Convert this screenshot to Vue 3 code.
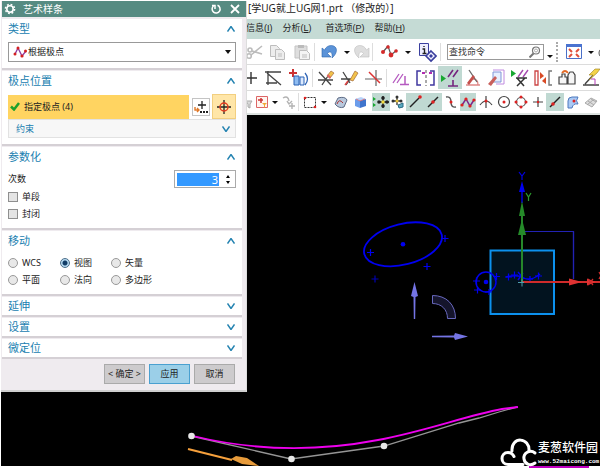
<script setup>
import { ref } from 'vue'

const method = ref('poles')
const degree = ref(3)
const single = ref(false)
const closed = ref(false)
const moveMode = ref('view')

const moveModes = [
  { id: 'wcs', label: 'WCS' },
  { id: 'view', label: '视图' },
  { id: 'vector', label: '矢量' },
  { id: 'plane', label: '平面' },
  { id: 'normal', label: '法向' },
  { id: 'polygon', label: '多边形' }
]

const collapsed = ['延伸', '设置', '微定位']

const menus = [
  { text: '信息', key: 'I' },
  { text: '分析', key: 'L' },
  { text: '首选项', key: 'P' },
  { text: '帮助', key: 'H' }
]

const CARET = '<path d="M-3-1h6L0 2z" fill="#111"/>'

// Glyphs are drawn around the origin of each button.
const fileTools = [
  { n: '剪切', w: 18, g: '<g fill="none" stroke="#bcbcbc" stroke-width="1.6"><path d="M-4 3 7-6M-3-1 7 2"/><circle cx="-6" cy="4" r="2.3"/><circle cx="-5" cy="-2" r="2"/></g>' },
  { n: '复制', w: 26, g: '<g fill="#ededed" stroke="#bdbdbd"><path d="M-6.500-6.500h6l3 3v8h-9z"/><path d="M-1.500-2.500h6l3 3v7h-9z"/><path d="M1 2h4M1 4h4"/></g>' },
  { n: '粘贴', w: 24, g: '<path d="M-7-6H5V6H-7z" fill="#dedede" stroke="#c3c3c3"/><path d="M-4-7h6v3h-6z" fill="#bbb"/><path d="M-2.500-1.500h7l3 3v6h-10z" fill="#f4f4f4" stroke="#bdbdbd"/><path d="M0 3h5M0 5h5" stroke="#bdbdbd"/>' },
  { sep: true },
  { n: '撤销', w: 26, g: '<path d="M-7-4v9h9l-3.500-3.500C0-1 4-1 3 6c6-5 6-12-.5-12.500C-1-6.500-3-5-4.500-2z" fill="#5b93d8" stroke="#2e64ad" stroke-width=".6"/>' },
  { n: '撤销列表', w: 10, g: CARET },
  { n: '重做', w: 20, g: '<path d="M7-4v9h-9l3.500-3.500C0-1-4-1-3 6c-6-5-6-12 .5-12.500C1-6.500 3-5 4.500-2z" fill="#dedede" stroke="#bdbdbd" stroke-width=".6"/>' },
  { sep: true },
  { n: '样条', w: 30, g: '<path d="M-6 0-1-6 2 3 8-2" fill="none" stroke="#555" stroke-width="1.2"/><g fill="#d52b2b"><circle cx="-6" cy="0" r="2"/><circle cx="-1" cy="-5" r="1.800"/><circle cx="2" cy="3" r="2.4"/><circle cx="7" cy="-1" r="1.800"/></g>' },
  { n: '样条列表', w: 8, g: CARET },
  { n: '对象信息', w: 28, g: '<path d="M-6.500-8.500h9v12h-9z" fill="#eef" stroke="#3a3f9e"/><path d="M-2-6v1M-3.500-3h2v4M-3.500 1.500h4" stroke="#222" fill="none" stroke-width="1.4"/><path d="m5-1 5 5-5 5-5-5z" fill="#eef" stroke="#3a3f9e" stroke-width="1.6"/><path d="m5 2 2 2-2 2-2-2z" fill="#3a3f9e"/>' },
  { sep: true }
]
const windowTools = [
  { n: '适合窗口', w: 24, g: '<path d="M-7.500-7.500h15v14h-15z" fill="#fff" stroke="#4a6fc8"/><path d="M-8-8H8v3H-8z" fill="#4a73d0"/><path d="m-5-3 3 3m7-3-3 3M-5 5l3-3M5 5 2 2" stroke="#e0503c" stroke-width="2"/>' },
  { n: '窗口列表', w: 10, g: CARET },
  { n: '更多', w: 10, g: '<circle cx="3" cy="1" r="5" fill="none" stroke="#555"/>' }
]

const sketchTools = [
  { n: '点', w: 14, g: '<path d="M-2-6V6M-8 0H4" stroke="#333" stroke-width="1.4"/>' },
  { n: '修剪', w: 26, g: '<path d="M-8-6H8M-5-7V7M-6-5 8 7M-7 5H4" stroke="#444" stroke-width="1.3" fill="none"/>' },
  { n: '拉伸', w: 26, g: '<path d="M-6-9v8M-10-5h8" stroke="#c33" stroke-width="2"/><path d="M-5-2h5V7h-5z" fill="#8fbcf0" stroke="#2b62b5"/><path d="M1-1h4v8H1z" fill="#dceaff" stroke="#2b62b5"/><path d="M6-5q5 6 0 12" fill="none" stroke="#2b62b5" stroke-width="1.2"/>' },
  { sep: true },
  { n: '快速修剪', w: 24, g: '<path d="M-7-6 5 7M-8 2H7M-4 7 2-2" stroke="#444" stroke-width="1.3"/><path d="m1-2 4-5 3 2-4 5z" fill="#f2c34b" stroke="#a56a3a" stroke-width=".7"/><path d="m1-2 1-2 3 3-1 2z" fill="#e06666"/>' },
  { n: '快速延伸', w: 24, g: '<path d="M-7-6 0 5M-9 1H0L-4 7" stroke="#444" stroke-width="1.3" fill="none"/><path d="M-2 3-5 7" stroke="#d44" stroke-width="1.600"/><path d="m0 2 5-9 3 2-5 8z" fill="#f2c34b" stroke="#a56a3a" stroke-width=".7"/>' },
  { n: '制作拐角', w: 24, g: '<path d="M-9 1H8M2-8V8" stroke="#666" stroke-width="1.200"/><path d="M-5-6 6 5" stroke="#dc3333" stroke-width="1.5"/>' },
  { sep: true },
  { n: '几何约束', w: 26, g: '<path d="m-8 5 6-9M-4 5l6-9" stroke="#b55ac0" stroke-width="1.3"/><path d="M4-2V6M-1 6.500H8" stroke="#b55ac0" stroke-width="1.5"/>' },
  { n: '对称', w: 24, g: '<path d="M-5-7h-4V7h4M4-7h4V7H4" stroke="#4038a0" stroke-width="1.5" fill="none"/><path d="M0-8V8" stroke="#555" stroke-dasharray="3 2"/><path d="m-4-5 3 0m4 0h3" stroke="#b12db1" stroke-width="2"/>' },
  { n: '显示约束', w: 24, on: true, g: '<path d="M-9-3v7l5-3.500z" fill="#19a832"/><path d="m-2-1 5-7M3-1l5-7M3 2v6M-2 8H8" stroke="#75247f" stroke-width="1.6"/>' },
  { n: '角度', w: 22, g: '<path d="M-7 7H7M0 1q5 0 5 6" stroke="#e08888" fill="none" stroke-width="1.3"/><path d="M-4-8 4 4" stroke="#666" stroke-width="1.3"/><path d="m-6 5 6-8 2 2-6 8z" fill="#c4504c"/>' },
  { n: '自动尺寸', w: 24, g: '<path d="M-3-6H5V4h-8z" fill="#e6efff" stroke="#8094d6"/><path d="M-3-8H8M8-8V6H0" fill="none" stroke="#c08ae0"/><path d="m-8 6 7-8 2 2-6 8z" fill="#c9605c"/>' },
  { n: '删除约束', w: 24, g: '<path d="M-9-8v7l5-3.500z" fill="#19a832"/><path d="m-2-1 5-7M3-1l5-7" stroke="#a64bb0" stroke-width="1.4"/><path d="m-3 0 7 8M5 0l-8 8M-4 0H7" stroke="#333" stroke-width="1.5"/>' },
  { n: '镜像', w: 22, g: '<path d="M-8-7h3V7h-3z" fill="none" stroke="#c44" stroke-width="1.3"/><path d="M9-7H6V7h3" fill="none" stroke="#777" stroke-width="1.4"/><path d="M-3-6v7l4-3zM3-1v7l-4-3z" fill="#d84b26"/>' },
  { n: '偏置', w: 26, g: '<path d="M-8 6V-1h3v-3h3v3h2v7zM1 6V-3l2-3h3l2 3v9z" fill="#f6f6f6" stroke="#444" stroke-width="1.2"/><path d="M-5-5q3-4 6 0" fill="none" stroke="#e46a26" stroke-width="1.800"/>' },
  { n: '推断约束', w: 22, g: '<path d="M-6 6 5-6M-8 7H8" fill="none" stroke="#444" stroke-width="1.4"/><path d="M4-9-2-3h4l-4 5 8-7H6l3-4z" fill="#f3d34a" stroke="#9b7d1c" stroke-width=".6"/><path d="M0 1h4v6" fill="none" stroke="#b43eb8"/>' }
]

const snapTools = [
  { n: '过滤', w: 8, g: '<path d="M-4-1h6L0 2v4l-2-1V2z" fill="#ddd" stroke="#aaa"/>' },
  { n: '选择过滤', w: 16, g: '<path d="M-5.500-5.500h11v11h-11z" fill="#fff5f0" stroke="#d66"/><path d="M-1-4v5M-4-2h5" stroke="#c33" stroke-width="1.5"/><path d="M0 1h5L3 3v3L2 5V3z" fill="#f0a733"/>' },
  { n: '过滤列表', w: 10, g: CARET },
  { n: '重置过滤', w: 18, g: '<path d="M-6-4q5-3 6 3M-2-1l2 3 3-3M0 4h6M3 1v6" fill="none" stroke="#b3b3b3" stroke-width="1.4"/>' },
  { sep: true },
  { n: '矩形选择', w: 20, g: '<path d="M-5.500-4.500h11v10h-11z" fill="none" stroke="#333" stroke-dasharray="2 1"/><circle cx="-5" cy="-4" r="1.3" fill="#d22"/><circle cx="5" cy="5" r="1.300" fill="#d22"/>' },
  { n: '选择列表', w: 8, g: CARET },
  { n: '面', w: 24, g: '<path d="M-5 2-2-4q7-2 9 2L4 5q-5 2-9-3z" fill="#b9c9dd" stroke="#5d6b85"/><path d="M-3 2q2-6 6-1" fill="none" stroke="#a33"/>' },
  { n: '实体', w: 16, g: '<path d="m-5-3 6-2 5 2-6 2z" fill="#b9d3fa"/><path d="m-5-3 5 2v7l-5-2z" fill="#6b9deb"/><path d="m0-1 6-2v7L0 6z" fill="#3f74cc"/><path d="m-4-3 4 2 5-2" stroke="#d55" fill="none" stroke-width=".7"/>' },
  { gap: true },
  { n: '启用捕捉', w: 18, on: true, g: '<path d="M-8-5v4l3-2zM-8 1v4l3-2z" fill="#19a832"/><path d="M2-6v12M-3 0H8" stroke="#222" stroke-width="1.4"/><g fill="#222"><circle cx="2" cy="-4" r="1.800"/><circle cx="2" cy="4" r="1.800"/><circle cx="-2" cy="0" r="1.800"/><circle cx="6" cy="0" r="1.800"/></g><circle cx="2" cy="0" r="1.700" fill="#f3dc41"/>' },
  { n: '捕捉设置', w: 16, g: '<path d="M-1-6v9M-5-1h8" stroke="#333" stroke-width="1.300"/><g fill="#333"><circle cx="-1" cy="-5" r="1.500"/><circle cx="-5" cy="-1" r="1.500"/><circle cx="3" cy="-1" r="1.500"/></g><circle cx="-1" cy="-1" r="1.500" fill="#e8c53a"/><path d="m0 3 5-2v4l-4 1z" fill="#5dabc3" stroke="#296c83"/>' },
  { n: '端点', w: 18, on: true, g: '<path d="m-5 5 9-9" stroke="#222" stroke-width="1.400"/><circle cx="5" cy="-5" r="1.800" fill="#d22"/>' },
  { n: '中点', w: 18, on: true, g: '<path d="m-5 5 10-10" stroke="#222" stroke-width="1.400"/><circle r="1.800" fill="#d22"/>' },
  { n: '控制点', w: 18, g: '<path d="M-5-5q5-1 5 5t5 5" fill="none" stroke="#555" stroke-width="1.400"/><circle r="1.500" fill="#d22"/>' },
  { n: '极点', w: 16, on: true, g: '<path d="m-6 3 4-6 4 7 4-6" fill="none" stroke="#7b278b" stroke-width="1.500"/><g fill="#d22"><circle cx="-6" cy="3" r="1.600"/><circle cx="-2" cy="-3" r="1.600"/><circle cx="2" cy="4" r="1.600"/><circle cx="6" cy="-2" r="1.600"/></g>' },
  { n: '交点', w: 20, g: '<path d="M-6 3q6-8 12 0M0-6V6" fill="none" stroke="#444" stroke-width="1.200"/><circle cy="-1" r="1.500" fill="#d22"/>' },
  { n: '圆心', w: 16, g: '<circle r="5.500" fill="none" stroke="#444" stroke-width="1.200"/><circle r="1.500" fill="#d22"/>' },
  { n: '象限点', w: 18, g: '<circle r="4.500" fill="none" stroke="#555" stroke-width="1.200"/><g fill="#d22"><circle cx="-5" r="1.500"/><circle cx="5" r="1.500"/><circle cy="-5" r="1.500"/><circle cy="5" r="1.500"/></g>' },
  { n: '现有点', w: 16, g: '<path d="M0-5V5M-5 0H5" stroke="#444" stroke-width="1.200"/><circle r="1.200" fill="#d22"/>' },
  { n: '曲线上点', w: 18, on: true, g: '<path d="m-5 5 10-10" stroke="#222" stroke-width="1.400"/><circle cx="-2" cy="2" r="1.800" fill="#d22"/>' },
  { n: '面上点', w: 18, g: '<path d="M-5-1q0-4 4-4h6q-3 4 0 7-5-1-6 4h-4z" fill="#a9c9f5" stroke="#4d78bd"/><circle cx="1" cy="-1" r="1.500" fill="#d22"/>' },
  { n: '网格点', w: 18, g: '<path d="m-6 1 6-5 6 3-5 6zM-3-1l6 4M0-3l5 3M-4 3l6-5" fill="#ddd" stroke="#aaa"/>' }
]
const rows = [sketchTools, snapTools]
</script>

<template>
  <div class="app">
    <header class="chrome">
      <h1 class="doc">[学UG就上UG网1.prt （修改的）]</h1>
      <nav class="menu">
        <a v-for="m in menus" :key="m.key" href="#">{{ m.text }}(<u>{{ m.key }}</u>)</a>
      </nav>
      <div class="bar bar-file">
        <template v-for="(t, i) in fileTools" :key="i">
          <span v-if="t.sep" class="sep"></span>
          <button v-else class="tool" :style="{ width: t.w + 'px' }" :aria-label="t.n">
            <svg viewBox="-11 -11 22 22" width="22" height="22" v-html="t.g" />
          </button>
        </template>
        <label class="search">
          <input type="text" placeholder="查找命令" aria-label="查找命令" />
          <svg viewBox="0 0 12 12" width="12" height="12"><circle cx="7" cy="4.500" r="3.500" fill="#fff" stroke="#777" stroke-width="1.200" /><circle cx="7" cy="4.500" r="1.500" fill="none" stroke="#aaa" /><path d="m4.500 7.500-4 4" stroke="#777" stroke-width="2" /></svg>
        </label>
        <button class="tool low" aria-label="搜索列表"><svg viewBox="-4 -4 8 8" width="8" height="8"><path d="M-3-1h6L0 2z" fill="#111" /></svg></button>
        <span class="grip"></span>
        <button v-for="t in windowTools" :key="t.n" class="tool" :style="{ width: t.w + 'px' }" :aria-label="t.n">
          <svg viewBox="-11 -11 22 22" width="22" height="22" v-html="t.g" />
        </button>
      </div>
      <div v-for="(row, r) in rows" :key="r" class="bar" :class="r ? 'bar-snap' : 'bar-sketch'">
        <template v-for="(t, i) in row" :key="i">
          <span v-if="t.sep" class="sep"></span>
          <span v-else-if="t.gap" class="gap"></span>
          <button v-else class="tool" :class="{ on: t.on }" :style="{ width: t.w + 'px' }" :aria-label="t.n">
            <svg viewBox="-11 -11 22 22" width="22" height="22" v-html="t.g" />
          </button>
        </template>
      </div>
    </header>

    <main class="canvas">
      <svg class="scene" viewBox="1 115 599 353" preserveAspectRatio="xMinYMin meet">
        <path d="M0 114H600V466H0z" fill="#000" />
        <g fill="none" stroke="#0000f0" stroke-width="1.500">
          <ellipse cx="403" cy="244.300" rx="39.900" ry="20.300" transform="rotate(-14.200 403 244.300)" stroke-width="1.800" />
          <path d="M367 252.500h7m-3.500-3.500v7M441.500 238.500h7m-3.500-3.500v7M423.500 266.500h7m-3.500-3.500v7" stroke-width="1.200" />
          <path d="M371.500 279h7m-3.500-3.500v7" stroke="#0000b0" stroke-width="1.200" />
          <path d="M525 231.500h48.500V279" stroke="#2222b4" stroke-width="1.200" />
        </g>
        <circle cx="403" cy="244.300" r="2.300" fill="#0000f0" />
        <path d="M490.500 250.500h63.500v63.500h-63.500z" fill="#02131f" stroke="#0c91ee" stroke-width="2" />
        <path d="M573.500 231.500V279" stroke="#2222b4" stroke-width="1.200" />
        <g fill="none" stroke="#0000f0" stroke-width="1.500">
          <circle cx="486" cy="282" r="10" />
          <path d="M473 281h7m-3.500-3.500v7M474 290h7m-3.500-3.500v7M493 276.500h7m-3.500-3.500v7M485 292h7m-3-3v6M505 277h7m-3.500-3.500v7M511 275h7m-3.500-3.500v7M535 276h7m-3.500-3.500v7" stroke-width="1.200" />
          <path d="M506 277q12-3 18 1t16-4M518 272l6 7m-1-6-5 7M526 279h7m-3-3v6" stroke-width="1.400" />
        </g>
        <circle cx="486" cy="282" r="2.300" fill="#0000f0" />
        <path d="M522 203v-19" stroke="#0000d8" stroke-width="1.500" />
        <path d="m522 181-3 11h6z" fill="#0000f0" />
        <path d="M519 172l3 4 3-4m-3 4v4" fill="none" stroke="#0000e0" stroke-width="1.200" />
        <path d="M522 282v-76" stroke="#26872a" stroke-width="2" />
        <path d="m522 201-3 15h6zm0 18-4 16h8z" fill="#258a29" />
        <path d="m526 193 2.500 4 2.500-4m-2.500 4v4" fill="none" stroke="#2c9a2d" stroke-width="1.200" />
        <path d="M522 282h78" stroke="#cf2b2b" stroke-width="2" />
        <path d="M569 278.500v7l13-3.500zM587 278.500v7l9-3.500z" fill="#e03232" />
        <path d="m588 279 5 6m0-6-5 6" stroke="#cf2b2b" stroke-width="1.200" />
        <path d="m599 272 4 7m0-7-4 7" stroke="#cf2b2b" stroke-width="1.200" />
        <path d="M518 282.500h6m-2-3v7" stroke="#4f9fae" stroke-width="1" />
        <g fill="#7474e4">
          <path d="m414.500 282 3.500 14-2.500 1-.3 22h-1.400l-.3-22-2.500-1z" />
          <path d="m468 336.500-13 3.500-1-2.500-22-.3v-1.400l22-.3 1-2.500z" />
        </g>
        <path d="M432.500 295.500c14 0 23 9 23 23h-8c0-9-6-15-15-15z" fill="#15152c" stroke="#6868be" />

        <path d="m191 436 100 23 93-13 75-23 20-5 20-6 18-5" fill="none" stroke="#959595" stroke-width="1.300" />
        <path d="M193 436q91 22 185 4c48-9 87-24 124-31l16-2" fill="none" stroke="#ee00ee" stroke-width="1.800" />
        <g fill="#e8e8e8"><circle cx="191.500" cy="436" r="3.300" /><circle cx="291.500" cy="459" r="3.300" /><circle cx="384" cy="446" r="3.300" /></g>
        <path d="m188 449 44 11" stroke="#f6a03c" stroke-width="2" />
        <path d="m231 459 5-3 11 2 12 8-17-2z" fill="#e79b3b" />
        <path d="M529 467h60" stroke="#c000c0" stroke-width="2" />
        <g fill="none" stroke="#fff" stroke-width="3" stroke-linecap="round">
          <path d="M523 464.500h-15c-8 0-8-12 0-12 3 0 5 2 6 4M512 451c-1-15 18-14 17 0" />
          <path d="M535 453c-5-4-12 0-11 6 1 6 7 7 11 4" />
        </g>
        <text x="538" y="452" class="mark">麦葱软件园</text>
        <text x="538" y="463" class="site">www.52maicong.com</text>
      </svg>
    </main>

    <section class="dialog" aria-label="艺术样条">
      <header class="caption">
        <svg viewBox="-6 -6 12 12" width="12" height="12"><circle r="3.200" fill="none" stroke="#fff" stroke-width="1.600" /><circle r="4.600" fill="none" stroke="#fff" stroke-width="1.500" stroke-dasharray="1.800 1.810" /></svg>
        <h2>艺术样条</h2>
        <button aria-label="重置"><svg viewBox="-6 -6 12 12" width="12" height="12"><path d="M-2.500-3a4 4 0 1 0 4-.7M-4-3.500h3V0" fill="none" stroke="#fff" stroke-width="1.500" /></svg></button>
        <button aria-label="关闭"><svg viewBox="-6 -6 12 12" width="12" height="12"><path d="m-4-4 8 8m0-8-8 8" stroke="#fff" stroke-width="1.800" /></svg></button>
      </header>

      <div class="panel">
        <button class="head">类型<svg viewBox="0 0 8 6" width="8" height="6"><path d="m.500 5.500 3.500-5 3.500 5" /></svg></button>
        <label class="pick">
          <svg viewBox="0 0 14 12" width="14" height="12"><path d="m2 8 3-6 4 8 4-5" fill="none" stroke="#9340a0" stroke-width="1.400" /><g fill="#d42020"><circle cx="2" cy="8" r="1.500" /><circle cx="5" cy="2" r="1.500" /><circle cx="9" cy="10" r="1.600" /><circle cx="12.500" cy="5" r="1.500" /></g></svg>
          <select v-model="method" aria-label="类型"><option value="poles">根据极点</option><option value="through">通过点</option></select>
          <svg viewBox="0 0 6 4" width="6" height="4"><path d="M0 0h6L3 4z" fill="#111" /></svg>
        </label>
      </div>

      <div class="panel">
        <button class="head">极点位置<svg viewBox="0 0 8 6" width="8" height="6"><path d="m.500 5.500 3.500-5 3.500 5" /></svg></button>
        <div class="specify">
          <button class="current"><svg viewBox="0 0 10 9" width="10" height="9"><path d="m1 4.500 3 3L9 1" fill="none" stroke="#1ea02c" stroke-width="2.500" /></svg>指定极点 (4)</button>
          <button class="ctor" aria-label="点构造器"><svg viewBox="0 0 16 16" width="16" height="16"><path d="M9 2v8M5 6h8" stroke="#222" stroke-width="1.300" /><path d="M2 8v3h4m-2-2 2 2-2 2" fill="none" stroke="#e07828" stroke-width="1.400" /><path d="M7 12h2v2H7zm3 0h2v2h-2zm3 0h2v2h-2z" fill="#222" /></svg></button>
          <button class="aim" aria-label="推断点"><svg viewBox="-8 -8 16 16" width="16" height="16"><path d="M0-7V7M-7 0H7" stroke="#222" stroke-width="1.300" /><circle r="4" fill="none" stroke="#e33b20" stroke-width="1.500" /></svg></button>
        </div>
        <button class="sub">约束<svg viewBox="0 0 8 6" width="8" height="6"><path d="m.500.500 3.500 5 3.500-5" /></svg></button>
      </div>

      <div class="panel">
        <button class="head">参数化<svg viewBox="0 0 8 6" width="8" height="6"><path d="m.500 5.500 3.500-5 3.500 5" /></svg></button>
        <div class="field">
          <label for="degree">次数</label>
          <div class="spin">
            <input id="degree" v-model="degree" type="text" />
            <div class="steps">
              <button aria-label="增加" @click="degree++"><svg viewBox="0 0 4 3" width="4" height="3"><path d="M0 3h4L2 0z" /></svg></button>
              <button aria-label="减少" @click="degree--"><svg viewBox="0 0 4 3" width="4" height="3"><path d="M0 0h4L2 3z" /></svg></button>
            </div>
          </div>
        </div>
        <label class="check"><input v-model="single" type="checkbox" />单段</label>
        <label class="check"><input v-model="closed" type="checkbox" />封闭</label>
      </div>

      <div class="panel">
        <button class="head">移动<svg viewBox="0 0 8 6" width="8" height="6"><path d="m.500 5.500 3.500-5 3.500 5" /></svg></button>
        <div class="modes">
          <label v-for="m in moveModes" :key="m.id"><input v-model="moveMode" type="radio" name="move" :value="m.id" />{{ m.label }}</label>
        </div>
      </div>

      <div v-for="c in collapsed" :key="c" class="panel shut">
        <button class="head">{{ c }}<svg viewBox="0 0 8 6" width="8" height="6"><path d="m.500.500 3.500 5 3.500-5" /></svg></button>
      </div>

      <footer class="actions">
        <button>&lt; 确定 &gt;</button>
        <button class="primary">应用</button>
        <button>取消</button>
      </footer>
    </section>
  </div>
</template>

<style>
body { background: #fff; }
</style>

<style scoped>
.app {
  position: relative;
  display: flex;
  flex-direction: column;
  min-height: 100vh;
  overflow: hidden;
  font: 9px/12px "Noto Sans", "Noto Sans CJK SC", sans-serif;
  color: #222;
}
.app *, .app { box-sizing: border-box; }
button, input, select { font: inherit; color: inherit; }
button { border: 0; padding: 0; margin: 0; background: none; }
h1, h2 { margin: 0; font-weight: 400; }
svg { display: block; flex: none; }

.chrome { margin-left: 246px; overflow: hidden; }
.doc { height: 19px; padding-left: 2px; font-size: 10px; line-height: 17px; white-space: nowrap; }
.menu { display: flex; gap: 10px; height: 20px; background: #c5dbd5; font-family: "Liberation Sans", "Noto Sans CJK SC", sans-serif; line-height: 18px; white-space: nowrap; }
.menu a { color: #222; text-decoration: none; }
.menu a:nth-child(3) { margin-left: 4px; }
.bar { display: flex; align-items: center; border-bottom: 1px solid #dcdcdc; background: #fff; }
.bar-file { height: 26px; }
.bar-sketch { height: 26px; }
.bar-snap { height: 24px; border-bottom: 2px solid #dce2e0; }
.tool { display: flex; flex: none; align-items: center; justify-content: center; align-self: stretch; overflow: hidden; }
.bar-snap .tool { margin: 2px 0; }
.bar-sketch .tool { margin: 1px 0; }
.on { background: #c0d9d2; }
.sep { flex: none; width: 2px; height: 18px; border-left: 1px solid #ddd; }
.gap { flex: none; width: 4px; }
.search { display: flex; align-items: center; flex: none; width: 97px; height: 16px; margin-left: 5px; padding-right: 2px; border: 1px solid #999; }
.search input { flex: 1; min-width: 0; height: 12px; padding: 0 0 0 1px; border: 0; outline: 0; background: none; }
.search input::placeholder { color: #333; opacity: 1; }
.low { align-items: flex-end; width: 12px; padding-bottom: 4px; }
.grip { flex: none; width: 3px; height: 20px; margin: 0 3px 0 0; border-left: 2px dotted #aaa; }

.canvas { flex: 1; margin-left: 1px; }
.scene { width: 100%; height: auto; }
.mark { font: 500 12px "Noto Sans CJK SC", sans-serif; fill: #fff; }
.site { font: bold 6px "Liberation Mono", monospace; fill: #fff; }

.dialog { position: absolute; top: 1px; left: 1px; width: 246px; padding: 0 4px 6px 1px; border-right: 1px solid #ddd; border-bottom: 2px solid #cfcfcf; background: #efebef; }
.caption { display: flex; align-items: center; gap: 7px; height: 16px; margin: 0 -4px 2px 0; padding: 0 5px 0 2px; background: #568b82; color: #fff; }
.caption h2 { flex: 1; font-size: 10px; line-height: 14px; }
.panel { margin-bottom: 1px; padding: 2px 6px 6px; border-bottom: 2px solid #d5d0d5; background: #fff; }
.head { display: flex; align-items: center; justify-content: space-between; width: 100%; height: 16px; margin-bottom: 5px; padding-right: 1px; color: #2080b0; font-size: 11px; line-height: 16px; }
.head svg, .sub svg { fill: none; stroke: #2483b1; stroke-width: 1.5; }
.pick { display: flex; align-items: center; height: 20px; padding: 0 4px; border: 1px solid #999; }
.pick select { flex: 1; min-width: 0; height: 18px; padding: 0 0 0 1px; border: 0; outline: 0; appearance: none; background: none; }
.specify { display: flex; align-items: center; height: 25px; }
.current { display: flex; flex: 1; align-items: center; gap: 4px; height: 24px; padding-left: 2px; background: #ffd461; }
.ctor { display: flex; align-items: center; justify-content: center; width: 18px; height: 18px; margin: 0 2px 0 3px; border: 1px solid #c4c4c4; }
.aim { display: flex; align-items: center; justify-content: center; width: 24px; height: 25px; border: 1px solid #f2cf80; background: #ffe6a8; }
.sub { display: flex; align-items: center; justify-content: space-between; width: 100%; height: 19px; padding: 0 5px 0 7px; border: 1px solid #e2e2e2; background: #f7f7f7; color: #2080b0; }
.field { display: flex; align-items: center; justify-content: space-between; height: 18px; }
.spin { display: flex; width: 62px; height: 18px; padding: 2px; border: 1px solid #aaa; }
.spin input { width: 42px; height: 13px; padding: 0 1px; border: 0; outline: 0; background: #3399ff; color: #fff; font-size: 11px; text-align: right; }
.steps { display: flex; flex: 1; flex-direction: column; align-items: center; justify-content: space-around; padding-left: 3px; }
.check { display: flex; align-items: center; gap: 4px; height: 17px; }
.check input { width: 10px; height: 10px; margin: 0; appearance: none; border: 1px solid #8f8f8f; background: #e4e4e4; }
.check input:checked { background: #2483b1; }
.modes { display: grid; grid-template-columns: 52px 51px auto; }
.modes label { display: flex; align-items: center; gap: 4px; height: 17px; }
.modes input { width: 10px; height: 10px; margin: 0; appearance: none; border: 1px solid #999; border-radius: 50%; background: #e8e8e8; }
.modes input:checked { border-color: #4d6f8a; background: radial-gradient(circle, #103c66 0 2px, #b4d8f0 3px); }
.shut { padding-top: 1px; padding-bottom: 1px; }
.shut .head { margin-bottom: 0; }
.actions { display: flex; justify-content: flex-end; gap: 4px; padding: 4px 7px 0 0; }
.actions button { width: 41px; height: 20px; border: 1px solid #aaa; background: #cdcbcd; white-space: nowrap; }
.actions .primary { border-color: #4aa0d0; background: #9bcfe8; }
</style>
